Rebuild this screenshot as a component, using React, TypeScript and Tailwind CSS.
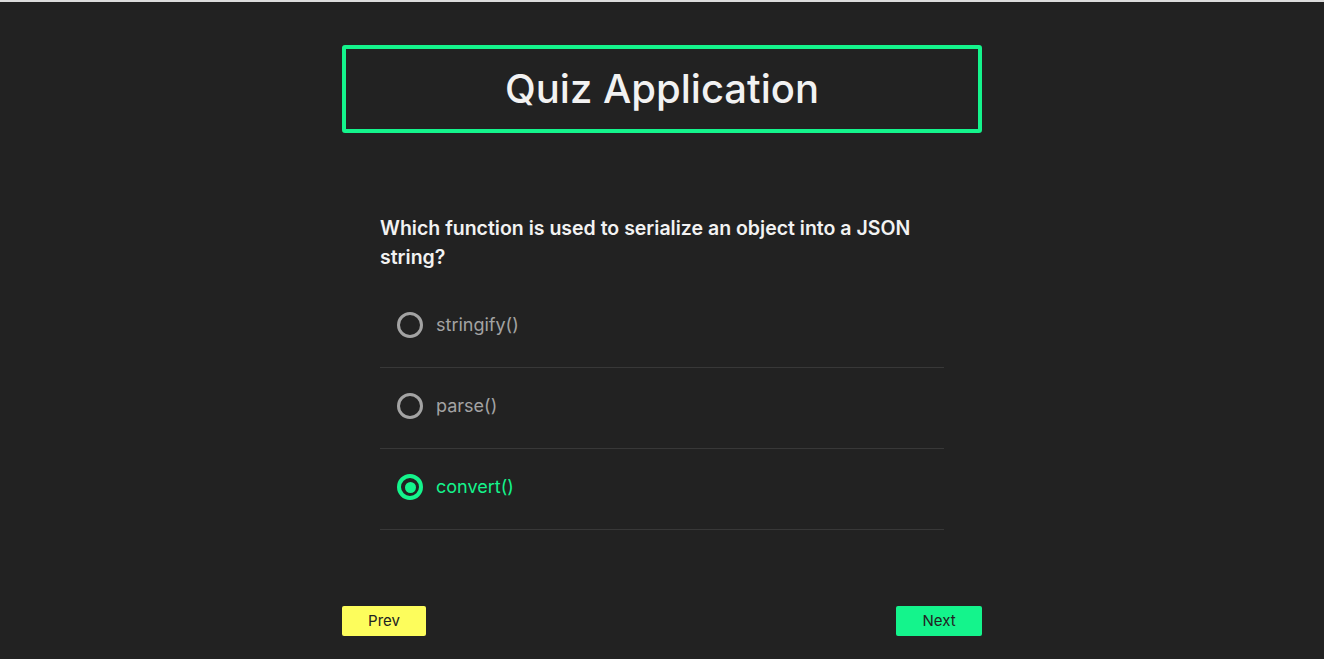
import React, { useState } from "react";

const question = {
  text: "Which function is used to serialize an object into a JSON string?",
  options: ["stringify()", "parse()", "convert()"],
};

export default function App() {
  const [selected, setSelected] = useState(2);

  return (
    <div className="min-h-screen bg-[#222222] font-['Inter',sans-serif]">
      <div className="h-[2px] bg-[#dcdcdc]" />
      <div className="mx-auto w-[640px] pt-[43px]">
        {/* Title */}
        <div className="flex h-[88px] items-center justify-center rounded-[3px] border-4 border-[#14f48c]">
          <h1 className="text-[40px] font-medium text-[#f2f2f2]">Quiz Application</h1>
        </div>

        {/* Question */}
        <div className="px-[38px] pt-[81px]">
          <h2 className="text-[19.5px] font-semibold leading-[29px] text-[#f2f2f2]">
            {question.text}
          </h2>

          <ul className="mt-[15px]">
            {question.options.map((opt, idx) => {
              const active = selected === idx;
              return (
                <li
                  key={opt}
                  onClick={() => setSelected(idx)}
                  className="flex cursor-pointer items-center gap-[13px] border-b border-[#383838] pt-[25px] pb-[29px] pl-[17px]"
                >
                  {active ? (
                    <span className="flex h-[26px] w-[26px] items-center justify-center rounded-full border-4 border-[#14f48c]">
                      <span className="h-[11px] w-[11px] rounded-full bg-[#14f48c]" />
                    </span>
                  ) : (
                    <span className="h-[26px] w-[26px] rounded-full border-[3px] border-[#a3a3a3]" />
                  )}
                  <span
                    className={`text-[18px] leading-[26px] ${active ? "text-[#14f48c]" : "text-[#a3a3a3]"}`}
                  >
                    {opt}
                  </span>
                </li>
              );
            })}
          </ul>
        </div>

        {/* Navigation */}
        <div className="mt-[76px] flex justify-between">
          <button className="h-[30px] w-[84px] rounded-[2px] bg-[#fdfd5c] text-[15px] text-[#222222]">Prev</button>
          <button className="h-[30px] w-[86px] rounded-[2px] bg-[#14f48c] text-[15px] text-[#222222]">Next</button>
        </div>
      </div>
    </div>
  );
}
